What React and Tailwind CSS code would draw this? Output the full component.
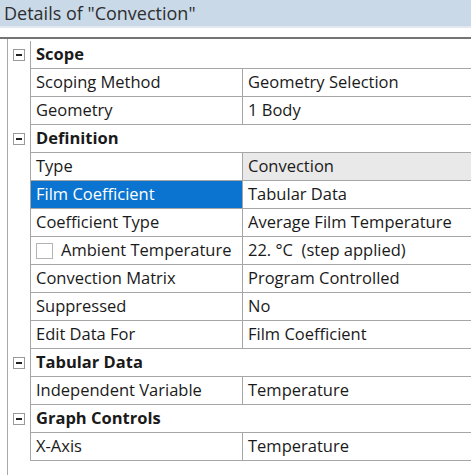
import React from 'react';

const rows = [
  { cat: 'Scope' },
  { label: 'Scoping Method', value: 'Geometry Selection' },
  { label: 'Geometry', value: '1 Body' },
  { cat: 'Definition' },
  { label: 'Type', value: 'Convection', grayValue: true },
  { label: 'Film Coefficient', value: 'Tabular Data', selected: true },
  { label: 'Coefficient Type', value: 'Average Film Temperature' },
  { label: 'Ambient Temperature', value: '22. °C  (step applied)', check: true },
  { label: 'Convection Matrix', value: 'Program Controlled' },
  { label: 'Suppressed', value: 'No' },
  { label: 'Edit Data For', value: 'Film Coefficient' },
  { cat: 'Tabular Data' },
  { label: 'Independent Variable', value: 'Temperature' },
  { cat: 'Graph Controls' },
  { label: 'X-Axis', value: 'Temperature' },
];

function MinusBox() {
  return (
    <div className="w-[12px] h-[12px] border border-[#9a9a9a] bg-white flex items-center justify-center">
      <div className="w-[6px] h-[2px] bg-[#222]" />
    </div>
  );
}

export default function App() {
  return (
    <div
      className="w-[471px] h-[475px] bg-white overflow-hidden text-[#1a1a1a]"
      style={{ fontFamily: '"Open Sans", "Noto Sans", sans-serif' }}
    >
      {/* Title bar */}
      <div className="h-[26px] bg-[#c9d9e7] pl-[4px] flex items-center text-[18px] text-[#2e2e2e] whitespace-nowrap">
        Details of "Convection"
      </div>
      <div className="h-[2px] bg-[#e1e8ef]" />
      <div className="h-[9px]" />
      <div className="h-[2px] bg-[#747474]" />

      {/* Property grid */}
      <div className="ml-[7px] border-l border-[#a8a8a8] pt-[2px] h-[436px]">
        {rows.map((r, i) => (
          <div key={i} className="flex h-[28px] text-[16.5px] whitespace-nowrap">
            <div className="w-[22px] shrink-0 flex items-center justify-center">
              {r.cat && <MinusBox />}
            </div>
            {r.cat ? (
              <div className="flex-1 border-l border-b border-[#a6a6a6] pl-[5px] flex items-center font-bold">
                {r.cat}
              </div>
            ) : (
              <div className="flex-1 flex border-b border-[#a6a6a6]">
                <div
                  className={
                    'w-[212px] shrink-0 border-l border-[#a6a6a6] pl-[5px] flex items-center gap-[8px] overflow-hidden ' +
                    (r.selected ? 'bg-[#0a74d0] text-white' : '')
                  }
                >
                  {r.check && <div className="w-[17px] h-[16px] shrink-0 border border-[#b4b4b4] bg-white" />}
                  {r.label}
                </div>
                <div
                  className={
                    'flex-1 border-l border-[#a6a6a6] pl-[5px] flex items-center ' +
                    (r.grayValue ? 'bg-[#e9e9e9]' : '')
                  }
                >
                  <span className="whitespace-pre">{r.value}</span>
                </div>
              </div>
            )}
          </div>
        ))}
      </div>
    </div>
  );
}
